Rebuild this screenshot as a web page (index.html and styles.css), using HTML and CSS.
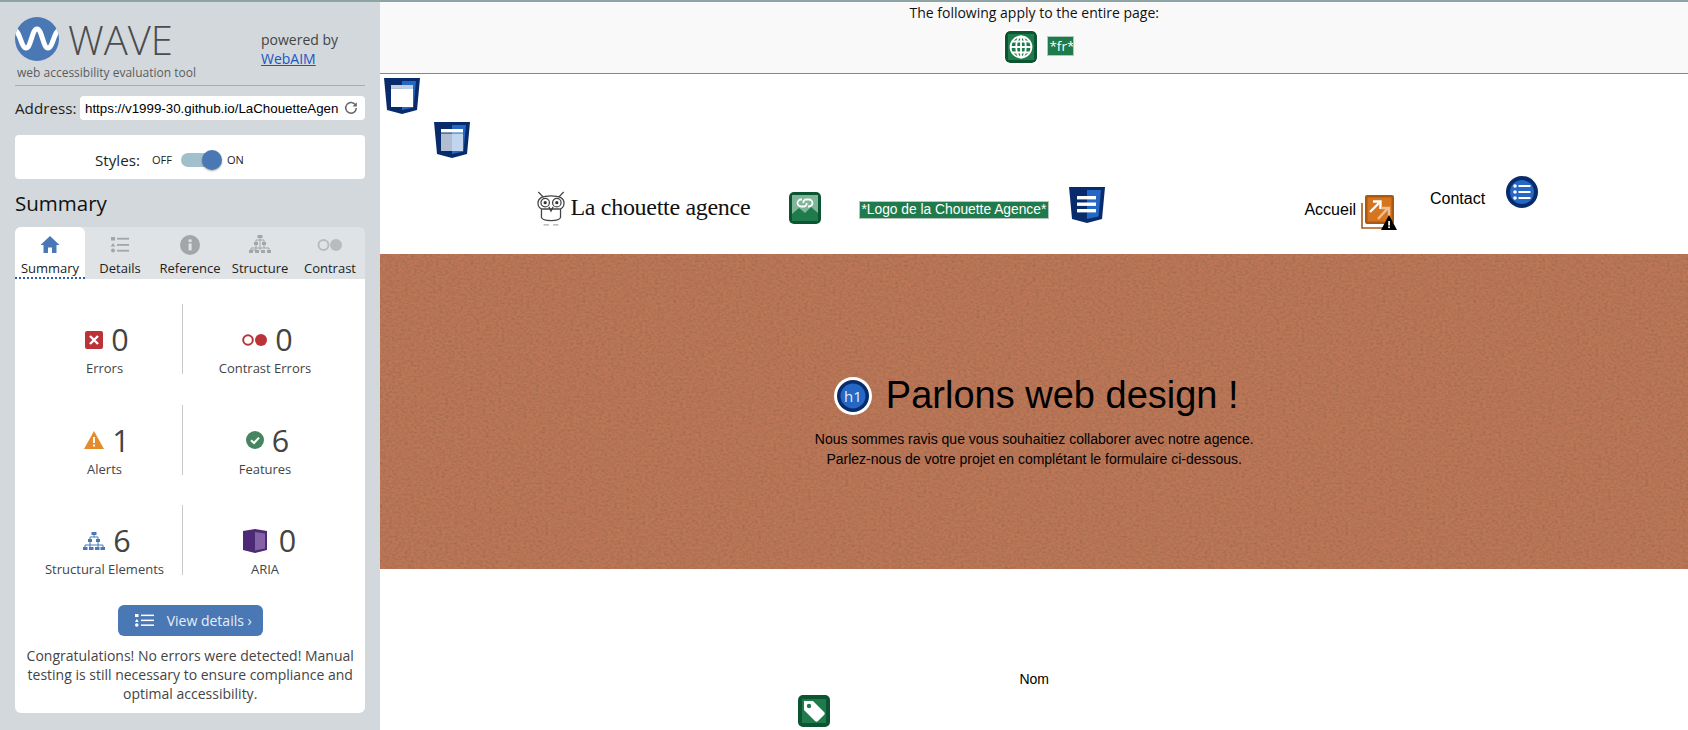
FILE: index.html
```html
<!DOCTYPE html>
<html lang="en">
<head>
<meta charset="utf-8">
<title>WAVE</title>
<link rel="stylesheet" href="styles.css">
</head>
<body>
<div class="app">
  <aside class="sidebar">
    <div class="brand">
      <div class="brand-main">
        <div class="brand-mark">
          <svg class="wave-logo" viewBox="0 0 44 44" width="44" height="44"><clipPath id="wave-clip"><circle cx="22" cy="22" r="22"/></clipPath><circle cx="22" cy="22" r="22" fill="#4a78b5"/><path d="M-1 13C5 13 6 31 11 31S17 12 22 12 28 31 33 31 39 13 45 13" clip-path="url(#wave-clip)" fill="none" stroke="#fff" stroke-width="5"/></svg>
          <span class="wave-word">WAVE</span>
        </div>
        <div class="brand-sub">web accessibility evaluation tool</div>
      </div>
      <div class="powered">powered by<br><a href="#">WebAIM</a></div>
    </div>
    <div class="address">
      <label class="address-label">Address:</label>
      <div class="address-box">
        <span class="address-url">https://v1999-30.github.io/LaChouetteAgen</span>
        <svg class="refresh" viewBox="0 0 14 14" width="14" height="14"><path d="M11.6 4.2A5.3 5.3 0 1 0 12.3 7" fill="none" stroke="#666" stroke-width="1.5"/><path d="M12.8 1.2V5.4H8.6Z" fill="#666"/></svg>
      </div>
    </div>
    <div class="styles-box">
      <span class="styles-label">Styles:</span>
      <span class="styles-off">OFF</span>
      <span class="switch"><span class="switch-knob"></span></span>
      <span class="styles-on">ON</span>
    </div>
    <h2 class="summary-title">Summary</h2>
    <nav class="tabs">
      <div class="tab tab-active">
        <svg viewBox="0 0 20 20" width="20" height="20"><path d="M10 1 0.5 10H3.5V18H8V12.5H12V18H16.5V10H19.5Z" fill="#4a78b5"/></svg>
        <span>Summary</span>
      </div>
      <div class="tab">
        <svg viewBox="0 0 20 20" width="20" height="20" fill="#a3a6a9"><rect x="1" y="2" width="4" height="3.5"/><path d="M3 8 5.3 11.5H.7Z"/><circle cx="3" cy="15.5" r="2"/><rect x="7" y="2.8" width="12" height="1.8"/><rect x="7" y="9" width="12" height="1.8"/><rect x="7" y="14.8" width="12" height="1.8"/></svg>
        <span>Details</span>
      </div>
      <div class="tab">
        <svg viewBox="0 0 20 20" width="20" height="20"><circle cx="10" cy="10" r="10" fill="#a3a6a9"/><rect x="8.6" y="8.4" width="3" height="7" fill="#e0e3e6"/><rect x="8.6" y="4.4" width="3" height="2.6" fill="#e0e3e6"/></svg>
        <span>Reference</span>
      </div>
      <div class="tab">
        <svg viewBox="0 0 22 20" width="22" height="20"><g fill="#a3a6a9"><rect x="8.5" y="0" width="5" height="3"/><rect x="5" y="7" width="4" height="3"/><rect x="13" y="7" width="4" height="3"/><rect y="15" width="4" height="3"/><rect x="6" y="15" width="4" height="3"/><rect x="12" y="15" width="4" height="3"/><rect x="18" y="15" width="4" height="3"/></g><path d="M11 3V15M7 10V15H2V13H20V15M15 10V13M7 7V5H15V7" fill="none" stroke="#a3a6a9"/></svg>
        <span>Structure</span>
      </div>
      <div class="tab">
        <svg viewBox="0 0 26 14" width="26" height="14"><circle cx="6.5" cy="7" r="5" fill="none" stroke="#b9bcbf" stroke-width="2"/><circle cx="19" cy="7" r="6" fill="#b9bcbf"/></svg>
        <span>Contrast</span>
      </div>
    </nav>
    <section class="panel">
      <div class="stats">
        <div class="stat">
          <div class="stat-top"><svg viewBox="0 0 18 18" width="18" height="18"><rect width="18" height="18" rx="2" fill="#bb3338"/><path d="M5 5 13 13M13 5 5 13" stroke="#fff" stroke-width="2.4"/></svg><span class="num">0</span></div>
          <div class="stat-label">Errors</div>
        </div>
        <div class="stat">
          <div class="stat-top"><svg viewBox="0 0 25 12" width="25" height="12"><circle cx="6" cy="6" r="4.8" fill="none" stroke="#bb3338" stroke-width="2"/><circle cx="19" cy="6" r="6" fill="#bb3338"/></svg><span class="num">0</span></div>
          <div class="stat-label">Contrast Errors</div>
        </div>
        <div class="stat">
          <div class="stat-top"><svg viewBox="0 0 20 18" width="20" height="18"><path d="M10 0 20 18H0Z" fill="#e58b2b"/><rect x="9" y="6" width="2" height="6" fill="#fff"/><rect x="9" y="13.5" width="2" height="2" fill="#fff"/></svg><span class="num">1</span></div>
          <div class="stat-label">Alerts</div>
        </div>
        <div class="stat">
          <div class="stat-top"><svg viewBox="0 0 18 18" width="18" height="18"><circle cx="9" cy="9" r="9" fill="#468560"/><path d="M5 9.2 8 12 13 6.6" fill="none" stroke="#fff" stroke-width="2"/></svg><span class="num">6</span></div>
          <div class="stat-label">Features</div>
        </div>
        <div class="stat">
          <div class="stat-top"><svg viewBox="0 0 22 20" width="22" height="20"><g fill="#4a78b5"><rect x="8.5" y="1" width="5" height="3"/><rect x="5" y="8" width="4" height="3"/><rect x="13" y="8" width="4" height="3"/><rect y="16" width="4.5" height="3"/><rect x="6" y="16" width="4.5" height="3"/><rect x="12" y="16" width="4.5" height="3"/><rect x="17.5" y="16" width="4.5" height="3"/></g><path d="M11 4V6M7 8V6H15V8M7 11V16M15 11V16M2 16V14H20V16" fill="none" stroke="#4a78b5"/></svg><span class="num">6</span></div>
          <div class="stat-label">Structural Elements</div>
        </div>
        <div class="stat">
          <div class="stat-top stat-top-aria"><svg viewBox="0 0 24 24" width="24" height="24"><path d="M0 2 12 0 24 2V21L12 24 0 21Z" fill="#4c2a75"/><path d="M12 3 22 4.5V19.5L12 21.5Z" fill="#8362a5"/></svg><span class="num">0</span></div>
          <div class="stat-label">ARIA</div>
        </div>
      </div>
      <a class="details-btn" href="#">
        <svg viewBox="0 0 19 13" width="19" height="13" fill="#fff"><rect x="0" y="0" width="3.5" height="3"/><path d="M1.8 4.8 3.6 8H0Z"/><circle cx="1.8" cy="11" r="1.8"/><rect x="6" y=".6" width="13" height="1.5"/><rect x="6" y="5.6" width="13" height="1.5"/><rect x="6" y="10.4" width="13" height="1.5"/></svg>
        <span>View details ›</span>
      </a>
      <p class="congrats">Congratulations! No errors were detected! Manual testing is still necessary to ensure compliance and optimal accessibility.</p>
    </section>
  </aside>

  <main class="page">
    <div class="doc-bar">
      <div class="doc-title">The following apply to the entire page:</div>
      <div class="doc-icons">
        <svg class="wave-globe" viewBox="0 0 32 32" width="32" height="32"><rect width="32" height="32" rx="5" fill="#0b5530"/><rect x="3" y="3" width="26" height="26" fill="#1f7a4c"/><g fill="none" stroke="#fff" stroke-width="1.8"><circle cx="16" cy="16" r="10.5"/><ellipse cx="16" cy="16" rx="4.8" ry="10.5"/><path d="M16 5.5V26.5M5.5 16H26.5M7 10.5H25M7 21.5H25"/></g></svg>
        <span class="tag-label tag-fr">*fr*</span>
      </div>
    </div>

    <header class="site-header">
      <svg class="lm lm-one" viewBox="0 0 36 36" width="36" height="36"><path d="M0 0H36L33 32 18 36 3 32Z" fill="#082c6b"/><path d="M18 3H32L29.5 29.5 18 32Z" fill="#2467c4"/><rect x="7" y="7" width="22" height="3.5" fill="#c4cddc"/><rect x="7" y="10.5" width="22" height="18.5" fill="#fff"/></svg>
      <svg class="lm lm-two" viewBox="0 0 36 36" width="36" height="36"><path d="M0 0H36L33 32 18 36 3 32Z" fill="#082c6b"/><path d="M18 3H32L29.5 29.5 18 32Z" fill="#2467c4"/><rect x="7" y="7" width="22" height="3.5" fill="#fff"/><rect x="7" y="11.5" width="11" height="17.5" fill="#b1bdd0"/><rect x="18" y="11.5" width="11" height="17.5" fill="#c1d5ef"/></svg>
      <div class="nav-row">
        <div class="logo">
          <svg class="owl" viewBox="0 0 30 34" width="32" height="36"><g fill="none" stroke="#444" stroke-width="1.2"><path d="M3 1 8 6M27 1 22 6"/><path d="M6 6C10 4 20 4 24 6 29 9 28 16 23 17H7C2 16 1 9 6 6Z"/><circle cx="9.5" cy="11" r="4"/><circle cx="20.5" cy="11" r="4"/><path d="M6 17V25C7 29 23 29 24 25V17"/><path d="M13 15 15 19 17 15"/></g><circle cx="9.5" cy="11" r="1.5" fill="#333"/><circle cx="20.5" cy="11" r="1.5" fill="#333"/><path d="M8 32H13M17 32H22" stroke="#aaa" stroke-width="1.3"/></svg>
          <span class="logo-text">La chouette agence</span>
        </div>
        <svg class="ic-imglink" viewBox="0 0 32 32" width="32" height="32"><rect width="32" height="32" rx="5" fill="#0b5530"/><rect x="3" y="3" width="26" height="26" fill="#7fb598"/><path d="M3 29V22L10 16 16 21 22 15 29 21V29Z" fill="#1f7a4c"/><g fill="none" stroke="#fff" stroke-width="1.8"><path d="M13 7.5H12A3.5 3.5 0 0 0 12 14.5H15.5A3 3 0 0 0 17.5 11"/><path d="M19 14.5H20A3.5 3.5 0 0 0 20 7.5H16.5A3 3 0 0 0 14.5 11"/></g></svg>
        <span class="tag-label tag-logo">*Logo de la Chouette Agence*</span>
        <svg class="ic-nav" viewBox="0 0 36 36" width="36" height="36"><path d="M0 0H36L33 32 18 36 3 32Z" fill="#082c6b"/><path d="M18 3H32L29.5 29.5 18 32Z" fill="#2467c4"/><rect x="8" y="9" width="19" height="3.4" fill="#fff"/><rect x="8" y="15.5" width="19" height="3.4" fill="#fff"/><rect x="8" y="22" width="19" height="3.4" fill="#fff"/></svg>
        <a class="nav-link nav-home" href="#">Accueil</a>
        <svg class="ic-redundant" viewBox="0 0 36 35" width="36" height="35"><path d="M1 8V33H28" fill="none" stroke="#a85a14" stroke-width="1.6"/><rect x="4" y="0" width="29" height="29" rx="2" fill="#a85a14"/><rect x="6.5" y="2.5" width="24" height="24" fill="#d7751f"/><path d="M9 17 19 7M12 6.5H19.5V14" fill="none" stroke="#fff" stroke-width="2.4"/><path d="M17 24 27 13M20 13H28V21" fill="none" stroke="#f0bd94" stroke-width="2.4"/><path d="M28 20 36 35H20Z" fill="#000"/><rect x="27.2" y="26" width="1.7" height="4.6" fill="#fff"/><rect x="27.2" y="31.4" width="1.7" height="1.7" fill="#fff"/></svg>
        <a class="nav-link nav-contact" href="#">Contact</a>
        <svg class="ic-list" viewBox="0 0 32 32" width="32" height="32"><circle cx="16" cy="16" r="16" fill="#082c6b"/><circle cx="16" cy="16" r="12" fill="#2467c4"/><g fill="#fff"><circle cx="9" cy="10" r="1.8"/><circle cx="9" cy="16" r="1.8"/><circle cx="9" cy="22" r="1.8"/><rect x="12.5" y="9" width="12" height="2"/><rect x="12.5" y="15" width="12" height="2"/><rect x="12.5" y="21" width="12" height="2"/></g></svg>
      </div>
    </header>

    <section class="hero">
      <svg class="hero-texture" aria-hidden="true"><filter id="paper"><feTurbulence type="fractalNoise" baseFrequency="0.32 0.45" numOctaves="5" seed="7"/><feColorMatrix type="matrix" values="0 0 0 0 0.30  0 0 0 0 0.13  0 0 0 0 0.07  1.1 0.7 0 0 -0.72"/></filter><rect width="100%" height="100%" filter="url(#paper)"/></svg>
      <div class="hero-content">
        <h1 class="hero-title">
          <svg class="ic-h1" viewBox="0 0 38 38" width="38" height="38"><circle cx="19" cy="19" r="19" fill="#fff"/><circle cx="19" cy="19" r="16" fill="#082c6b"/><circle cx="19" cy="19" r="12.5" fill="#2467c4"/><text x="19" y="25" text-anchor="middle" class="h1-glyph">h1</text></svg>
          <span>Parlons web design !</span>
        </h1>
        <p class="hero-text">Nous sommes ravis que vous souhaitiez collaborer avec notre agence.<br>Parlez-nous de votre projet en complétant le formulaire ci-dessous.</p>
      </div>
    </section>

    <section class="form-area">
      <div class="field-label">Nom</div>
      <svg class="ic-label" viewBox="0 0 32 32" width="32" height="32"><rect width="32" height="32" rx="5" fill="#0b5530"/><rect x="4" y="4" width="24" height="24" fill="#1f7a4c"/><path d="M6 6H15L26 17C27 18 27 19 26 20L20 26C19 27 18 27 17 26L6 15Z" fill="#fff"/><circle cx="11" cy="11" r="2.2" fill="#1f7a4c"/></svg>
    </section>
  </main>
</div>
</body>
</html>
```

FILE: styles.css
```css
* { box-sizing: border-box; }
html, body { margin: 0; height: 730px; overflow: hidden; background: #fff; }
body { font-family: "Open Sans", sans-serif; color: #000; }

.app {
  display: flex;
  height: 730px;
  border-top: 2px solid #8ea3a3;
}

/* Sidebar */
.sidebar {
  flex: 0 0 380px;
  height: 728px;
  padding: 15px 15px 0;
  background: #d3d8dc;
}
.brand {
  display: flex;
  height: 69px;
  border-bottom: 1px solid #a9adb1;
}
.brand-main { flex: 0 0 246px; }
.brand-mark { display: flex; align-items: center; height: 44px; }
.wave-word {
  margin-left: 9px;
  margin-top: 1px;
  font-size: 40px;
  font-weight: 300;
  line-height: 44px;
  color: #4a4c4e;
}
.brand-sub {
  margin-left: 2px;
  margin-top: 3px;
  font-size: 12px;
  line-height: 17px;
  color: #5a5d60;
}
.powered {
  padding-top: 13px;
  font-size: 14px;
  line-height: 19px;
  color: #444;
}
.powered a { color: #1a56c4; }

.address {
  display: flex;
  align-items: center;
  margin-top: 10px;
  height: 24px;
}
.address-label { flex: 0 0 65px; font-size: 15.2px; color: #222; }
.address-box {
  display: flex;
  align-items: center;
  flex: 1;
  height: 24px;
  padding: 0 7px 0 5px;
  background: #fff;
  border-radius: 4px;
}
.address-url {
  flex: 0 0 253px;
  white-space: nowrap;
  font-family: "Liberation Sans", sans-serif;
  font-size: 13.33px;
  color: #000;
}
.refresh { margin-left: 6px; }

.styles-box {
  display: flex;
  align-items: center;
  height: 44px;
  margin-top: 15px;
  padding: 5px 0 0 80px;
  background: #fff;
  border-radius: 4px;
}
.styles-label { font-size: 15.2px; color: #222; margin-right: 12px; }
.styles-off, .styles-on { font-size: 11px; color: #222; }
.switch {
  position: relative;
  width: 34px;
  height: 14px;
  margin: 0 12px 0 9px;
  background: #a0c0cc;
  border-radius: 7px;
}
.switch-knob {
  position: absolute;
  left: 21px;
  top: -3px;
  width: 20px;
  height: 20px;
  background: #4a78b5;
  border-radius: 50%;
  box-shadow: 0 1px 2px rgba(0,0,0,.35);
}

.summary-title {
  margin: 9px 0 0;
  font-size: 20.5px;
  font-weight: 400;
  line-height: 30px;
  color: #111;
}

.tabs {
  display: flex;
  height: 52px;
  margin-top: 9px;
  background: #e0e3e6;
  border-radius: 6px 6px 0 0;
}
.tab {
  display: flex;
  flex: 0 0 70px;
  flex-direction: column;
  align-items: center;
  height: 52px;
  font-size: 13px;
  color: #222;
}
.tab svg { height: 20px; margin-top: 8px; }
.tab span { margin-top: 4px; line-height: 18px; white-space: nowrap; }
.tab-active {
  background: #fff;
  border-radius: 6px 6px 0 0;
  border-bottom: 2px dotted #2a5eab;
}

.panel {
  height: 434px;
  background: #fff;
  border-radius: 0 0 6px 6px;
}
.stats {
  display: grid;
  grid-template-columns: 168px 182px;
  grid-auto-rows: 70px;
  row-gap: 30.5px;
  padding-top: 25px;
}
.stat {
  display: flex;
  flex-direction: column;
  align-items: center;
  padding-top: 18px;
}
.stat:nth-child(odd) { padding-left: 12px; border-right: 1px solid #c9c9c9; }
.stat:nth-child(even) { padding-right: 18px; }
.stat-top { display: flex; align-items: center; height: 35px; padding-left: 5px; color: #444; }
.stat-top-aria { padding-left: 9px; }
.stat-top-aria .num { margin-left: 12px; }
.num {
  margin-left: 8px;
  font-size: 30.5px;
  line-height: 35px;
  color: #444;
}
.stat-label { margin-top: 4px; font-size: 13px; line-height: 14px; white-space: nowrap; color: #444; }

.details-btn {
  display: flex;
  align-items: center;
  width: 145px;
  height: 31px;
  margin: 30px auto 0;
  padding: 0 0 1px 17px;
  background: #4a78b5;
  border-radius: 6px;
  color: #e8eef6;
  text-decoration: none;
  font-size: 14px;
}
.details-btn span { margin-left: 13px; }
.congrats {
  margin: 10px 8px 0;
  text-align: center;
  font-size: 14px;
  line-height: 19px;
  color: #444;
}

/* Page */
.page {
  flex: 1;
  min-width: 0;
  height: 728px;
  overflow: hidden;
  font-family: "Liberation Sans", sans-serif;
}
.doc-bar {
  height: 72px;
  background: #f9f9f9;
  border-bottom: 1px solid #7f8a85;
  text-align: center;
}
.doc-title {
  padding-top: 1px;
  font-family: "Open Sans", sans-serif;
  font-size: 14px;
  line-height: 19px;
  color: #111;
}
.doc-icons {
  display: flex;
  align-items: center;
  margin-top: 9px;
  padding-left: 625px;
}
.wave-globe { box-shadow: 0 0 0 2px #fff; border-radius: 5px; }
.tag-label {
  background: #1f7a4c;
  color: #fff;
  border: 1px solid #b6c8bd;
  font-family: "Liberation Sans", sans-serif;
  white-space: nowrap;
}
.tag-fr {
  margin-left: 10px;
  margin-top: -2px;
  padding: 0 1px;
  font-family: "Open Sans", sans-serif;
  font-size: 13.5px;
  line-height: 18px;
  width: 27px;
  overflow: hidden;
}

.site-header { height: 180px; padding-top: 4px; }
.lm { display: block; }
.lm-one { margin: 0 0 0 4px; }
.lm-two { margin: 8px 0 0 54px; }

.nav-row {
  display: flex;
  align-items: flex-start;
  margin-top: 18px;
}
.logo {
  display: flex;
  align-items: center;
  flex: 0 0 215px;
  margin: 15px 0 0 155px;
  height: 36px;
}
.logo-text {
  margin: -3px 0 0 3px;
  font-family: "Liberation Serif", serif;
  font-size: 24px;
  letter-spacing: -0.3px;
  white-space: nowrap;
  color: #111;
}
.ic-imglink { margin: 16px 0 0 39px; }
.tag-logo {
  margin: 25px 0 0 38px;
  padding: 0 1px;
  flex: 0 0 190px;
  font-size: 13.8px;
  line-height: 16px;
}
.ic-nav { margin: 11px 0 0 20px; }
.nav-link {
  color: #000;
  text-decoration: none;
  font-size: 16px;
  line-height: 18px;
  white-space: nowrap;
}
.nav-home { margin: 25px 0 0 199px; }
.ic-redundant { margin: 19px 0 0 5px; }
.nav-contact { margin: 14px 0 0 33px; }
.ic-list { margin: 0 0 0 21px; }

.hero {
  position: relative;
  height: 315px;
  background: #bd7757;
  overflow: hidden;
}
.hero-texture { position: absolute; inset: 0; width: 100%; height: 100%; }
.hero-content { position: relative; padding-top: 122px; text-align: center; }
.hero-title {
  display: flex;
  align-items: center;
  justify-content: center;
  height: 38px;
  margin: 0;
  padding-left: 4px;
  font-size: 38px;
  font-weight: 400;
  line-height: 38px;
  color: #000;
}
.ic-h1 { margin: 2px 14px 0 0; }
.h1-glyph { font-family: "Open Sans", sans-serif; font-size: 15px; fill: #e6eef8; }
.hero-text {
  margin: 15px 0 0;
  font-size: 14px;
  line-height: 20px;
  color: #000;
}

.form-area { padding-top: 101px; }
.field-label { font-size: 14px; line-height: 18px; text-align: center; }
.ic-label { display: block; margin: 7px 0 0 418px; }
```
